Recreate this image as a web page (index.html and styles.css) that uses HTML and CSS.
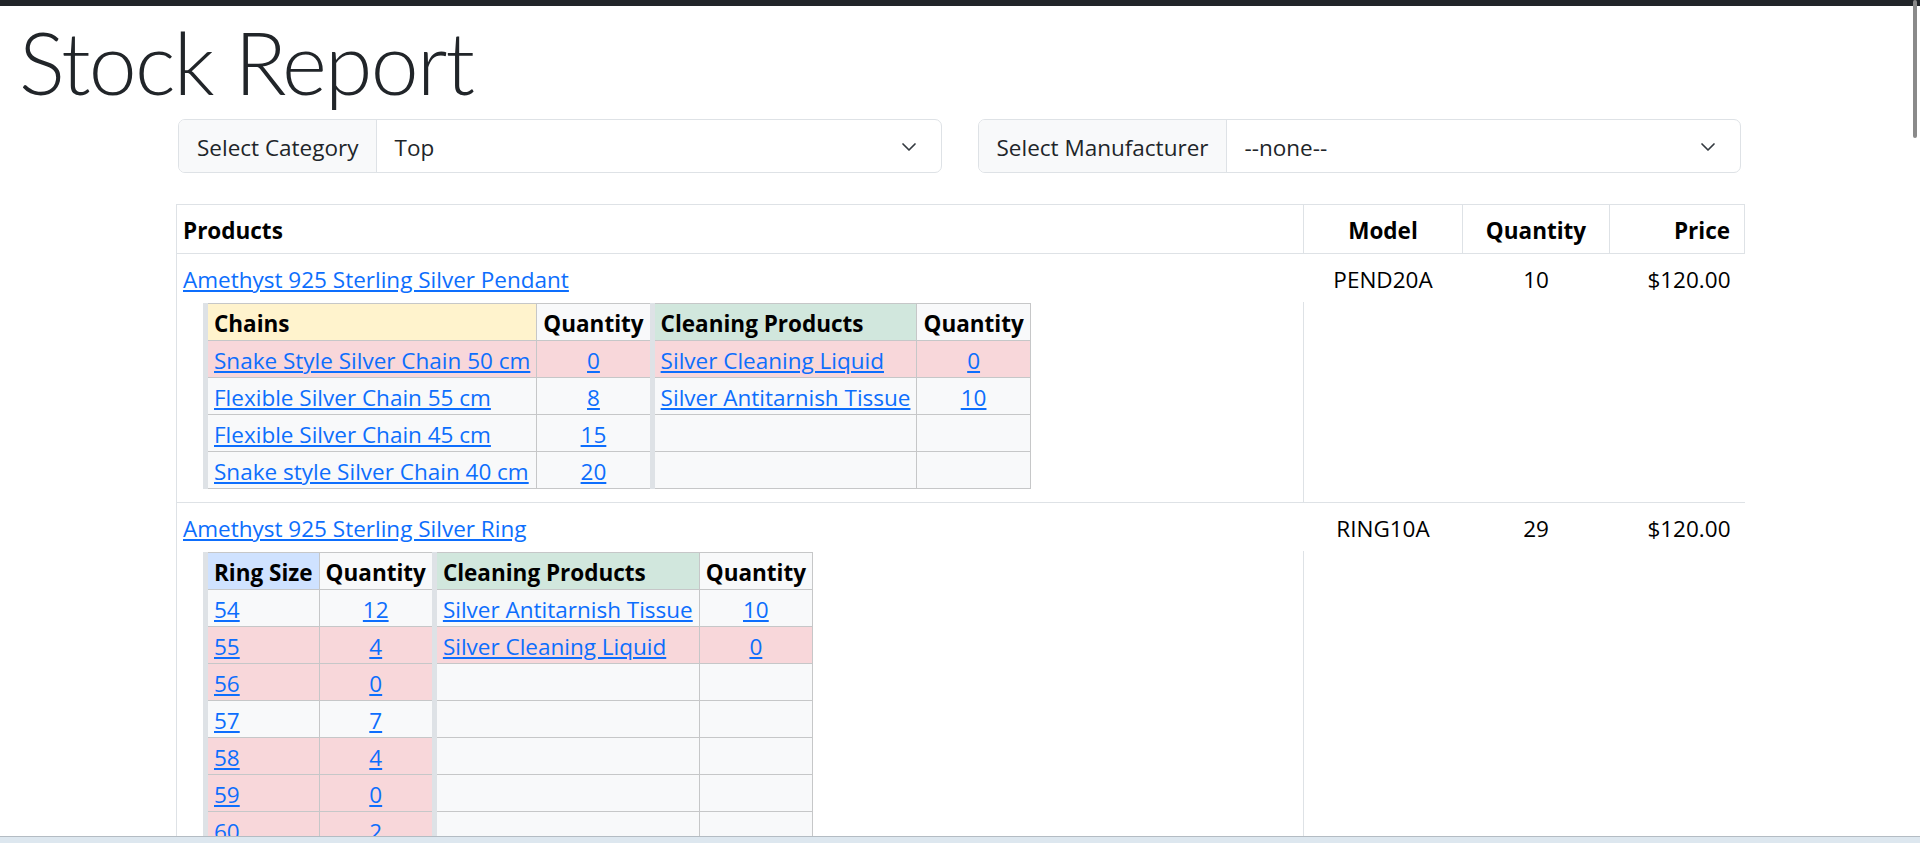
FILE: index.html
```html
<!DOCTYPE html>
<html lang="en">
<head>
    <meta charset="UTF-8">
    <meta name="viewport" content="width=device-width, initial-scale=1.0">
    <title>Stock Report</title>
    <link rel="stylesheet" href="styles.css">
</head>
<body>
    <h1 class="title">Stock Report</h1>

    <div class="report">
        <div class="filters">
            <div class="filter">
                <span class="filter-label">Select Category</span>
                <div class="filter-value">
                    <span>Top</span>
                    <svg class="chevron" viewBox="0 0 16 16" width="16" height="16"><path d="m2 5 6 6 6-6" fill="none" stroke="#343a40" stroke-width="1.7" stroke-linecap="round" stroke-linejoin="round"/></svg>
                </div>
            </div>
            <div class="filter">
                <span class="filter-label">Select Manufacturer</span>
                <div class="filter-value">
                    <span>--none--</span>
                    <svg class="chevron" viewBox="0 0 16 16" width="16" height="16"><path d="m2 5 6 6 6-6" fill="none" stroke="#343a40" stroke-width="1.7" stroke-linecap="round" stroke-linejoin="round"/></svg>
                </div>
            </div>
        </div>

        <table class="stock">
            <thead>
                <tr>
                    <th>Products</th>
                    <th class="col-model">Model</th>
                    <th class="col-qty">Quantity</th>
                    <th class="col-price">Price</th>
                </tr>
            </thead>

            <tbody>
                <tr class="product-row">
                    <td><a href="#">Amethyst 925 Sterling Silver Pendant</a></td>
                    <td class="col-model">PEND20A</td>
                    <td class="col-qty">10</td>
                    <td class="col-price">$120.00</td>
                </tr>
                <tr>
                    <td class="options-cell">
                        <table class="options">
                            <tr>
                                <th class="group-start head-chains">Chains</th>
                                <th class="head-qty">Quantity</th>
                                <th class="group-start head-clean">Cleaning Products</th>
                                <th class="head-qty">Quantity</th>
                            </tr>
                            <tr>
                                <td class="group-start is-low"><a href="#">Snake Style Silver Chain 50 cm</a></td>
                                <td class="qty is-low"><a href="#">0</a></td>
                                <td class="group-start is-low"><a href="#">Silver Cleaning Liquid</a></td>
                                <td class="qty is-low"><a href="#">0</a></td>
                            </tr>
                            <tr>
                                <td class="group-start"><a href="#">Flexible Silver Chain 55 cm</a></td>
                                <td class="qty"><a href="#">8</a></td>
                                <td class="group-start"><a href="#">Silver Antitarnish Tissue</a></td>
                                <td class="qty"><a href="#">10</a></td>
                            </tr>
                            <tr>
                                <td class="group-start"><a href="#">Flexible Silver Chain 45 cm</a></td>
                                <td class="qty"><a href="#">15</a></td>
                                <td class="group-start"></td>
                                <td class="qty"></td>
                            </tr>
                            <tr>
                                <td class="group-start"><a href="#">Snake style Silver Chain 40 cm</a></td>
                                <td class="qty"><a href="#">20</a></td>
                                <td class="group-start"></td>
                                <td class="qty"></td>
                            </tr>
                        </table>
                    </td>
                    <td colspan="3"></td>
                </tr>
            </tbody>

            <tbody>
                <tr class="product-row">
                    <td><a href="#">Amethyst 925 Sterling Silver Ring</a></td>
                    <td class="col-model">RING10A</td>
                    <td class="col-qty">29</td>
                    <td class="col-price">$120.00</td>
                </tr>
                <tr>
                    <td class="options-cell">
                        <table class="options">
                            <tr>
                                <th class="group-start head-ring">Ring Size</th>
                                <th class="head-qty">Quantity</th>
                                <th class="group-start head-clean">Cleaning Products</th>
                                <th class="head-qty">Quantity</th>
                            </tr>
                            <tr>
                                <td class="group-start"><a href="#">54</a></td>
                                <td class="qty"><a href="#">12</a></td>
                                <td class="group-start"><a href="#">Silver Antitarnish Tissue</a></td>
                                <td class="qty"><a href="#">10</a></td>
                            </tr>
                            <tr>
                                <td class="group-start is-low"><a href="#">55</a></td>
                                <td class="qty is-low"><a href="#">4</a></td>
                                <td class="group-start is-low"><a href="#">Silver Cleaning Liquid</a></td>
                                <td class="qty is-low"><a href="#">0</a></td>
                            </tr>
                            <tr>
                                <td class="group-start is-low"><a href="#">56</a></td>
                                <td class="qty is-low"><a href="#">0</a></td>
                                <td class="group-start"></td>
                                <td class="qty"></td>
                            </tr>
                            <tr>
                                <td class="group-start"><a href="#">57</a></td>
                                <td class="qty"><a href="#">7</a></td>
                                <td class="group-start"></td>
                                <td class="qty"></td>
                            </tr>
                            <tr>
                                <td class="group-start is-low"><a href="#">58</a></td>
                                <td class="qty is-low"><a href="#">4</a></td>
                                <td class="group-start"></td>
                                <td class="qty"></td>
                            </tr>
                            <tr>
                                <td class="group-start is-low"><a href="#">59</a></td>
                                <td class="qty is-low"><a href="#">0</a></td>
                                <td class="group-start"></td>
                                <td class="qty"></td>
                            </tr>
                            <tr>
                                <td class="group-start is-low"><a href="#">60</a></td>
                                <td class="qty is-low"><a href="#">2</a></td>
                                <td class="group-start"></td>
                                <td class="qty"></td>
                            </tr>
                        </table>
                    </td>
                    <td colspan="3"></td>
                </tr>
            </tbody>
        </table>
    </div>

    <div class="scroll-thumb"></div>
    <div class="status-strip"></div>
</body>
</html>
```

FILE: styles.css
```css
* {
    box-sizing: border-box;
}

html {
    scrollbar-width: none;
}

body {
    margin: 0;
    border-top: 6px solid #212529;
    font-family: "Open Sans", "Noto Sans", sans-serif;
    font-size: 22.5px;
    color: #212529;
    background: #fff;
}

a {
    color: #0d6efd;
}

.title {
    margin: 6px 0 7px 19px;
    font-family: Lato, "Open Sans", sans-serif;
    font-weight: 300;
    font-size: 86px;
    line-height: 100px;
    letter-spacing: -1.8px;
}

.report {
    width: 1569px;
    margin-left: 176px;
}

/* filter bar */
.filters {
    display: grid;
    grid-template-columns: 1fr 1fr;
    gap: 36px;
    padding: 0 4px 0 2px;
}

.filter {
    display: flex;
    height: 54px;
    border: 1px solid #dee2e6;
    border-radius: 7px;
    overflow: hidden;
}

.filter-label {
    display: flex;
    align-items: center;
    padding: 2px 18px 0;
    background: #f8f9fa;
    border-right: 1px solid #dee2e6;
    white-space: nowrap;
}

.filter-value {
    flex: 1;
    display: flex;
    align-items: center;
    justify-content: space-between;
    padding: 2px 24px 0 17px;
}

.chevron {
    display: block;
}

/* stock table */
.stock {
    width: 100%;
    margin-top: 31px;
    border-collapse: collapse;
    border-left: 1px solid #dee2e6;
    color: #000;
}

.stock > thead th {
    padding: 10px 6px 6px;
    line-height: 32px;
    text-align: left;
    font-weight: 700;
    border: 1px solid #dee2e6;
}

.stock > tbody {
    border-bottom: 1px solid #dee2e6;
}

.product-row td {
    padding: 10px 6px 6px;
    line-height: 32px;
}

.stock .col-model {
    width: 159px;
    text-align: center;
}

.stock .col-qty {
    width: 147px;
    text-align: center;
}

.stock .col-price {
    width: 135px;
    padding-right: 14px;
    text-align: right;
}

.options-cell {
    padding: 1px 6px 13px 26px;
    border-right: 1px solid #dee2e6;
}

/* nested option tables */
.options {
    border-collapse: collapse;
}

.options th,
.options td {
    padding: 6px 6px 2px;
    line-height: 28px;
    border: 1px solid #c6c7c8;
    background: #f8f9fa;
    text-align: left;
    white-space: nowrap;
}

.options th {
    font-weight: 700;
}

.options .group-start {
    border-left: 5px solid #dee2e6;
}

.options .head-chains {
    background: #fff3cd;
}

.options .head-ring {
    background: #cfe2ff;
}

.options .head-clean {
    background: #d1e7dd;
}

.options .head-qty,
.options .qty {
    text-align: center;
}

.options .is-low {
    background: #f8d7da;
}

/* window chrome */
.scroll-thumb {
    position: fixed;
    top: 0;
    right: 3px;
    width: 4px;
    height: 138px;
    border-radius: 2px;
    background: #8a8a8a;
}

.status-strip {
    position: fixed;
    left: 0;
    right: 0;
    bottom: 0;
    height: 7px;
    border-top: 1px solid #b4bcc3;
    background: #dde7ef;
}
```
